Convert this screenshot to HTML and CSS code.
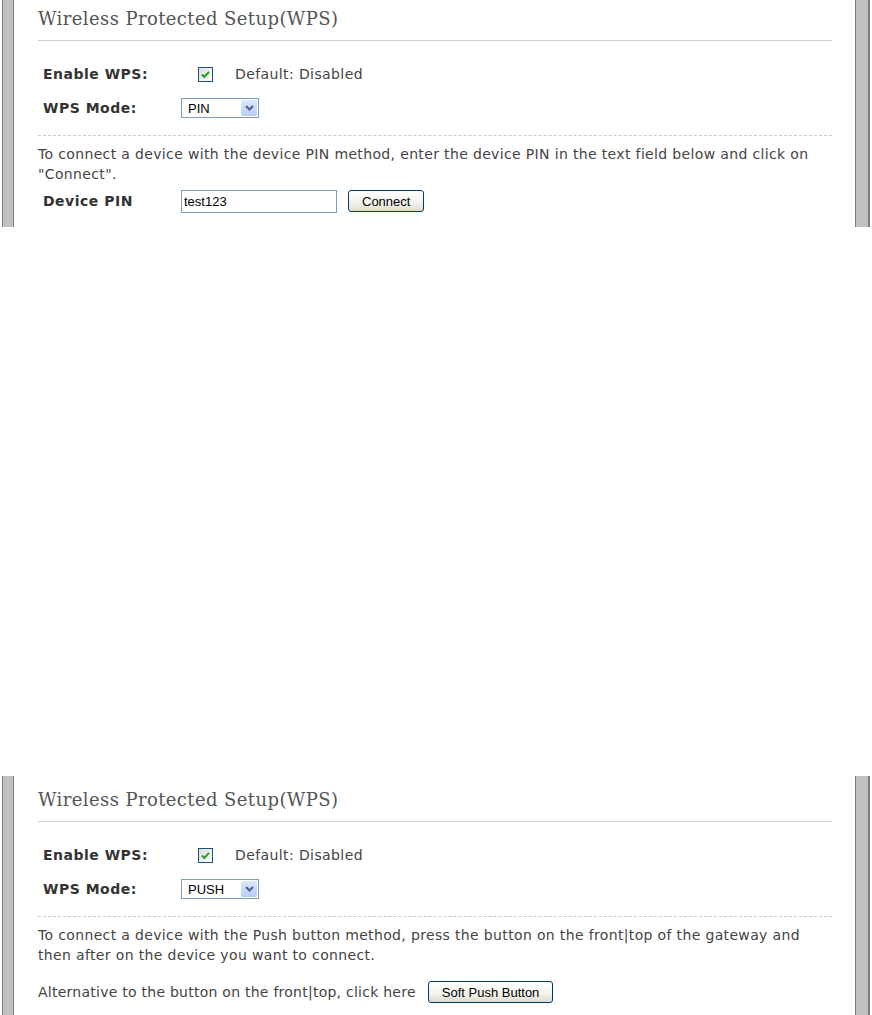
FILE: index.html
```html
<!DOCTYPE html>
<html lang="en">
<head>
    <meta charset="UTF-8">
    <title>Wireless Protected Setup</title>
    <link rel="stylesheet" href="styles.css">
</head>
<body>
    <!-- PIN mode -->
    <div class="panel panel-first">
        <div class="frame-left"></div>
        <div class="content">
            <h2 class="title">Wireless Protected Setup(WPS)</h2>

            <div class="row">
                <label class="label">Enable WPS:</label>
                <span class="checkbox">
                    <svg width="9" height="9" viewBox="0 0 9 9"><path d="M1 4.5 L3.3 7 L8 1.8" fill="none" stroke="#21a121" stroke-width="2"/></svg>
                </span>
                <span class="hint">Default: Disabled</span>
            </div>

            <div class="row">
                <label class="label">WPS Mode:</label>
                <div class="select">
                    <span class="select-value">PIN</span>
                    <span class="select-arrow">
                        <svg width="9" height="6" viewBox="0 0 9 6"><path d="M1 1 L4.5 4.5 L8 1" fill="none" stroke="#4d6185" stroke-width="2"/></svg>
                    </span>
                </div>
            </div>

            <div class="divider"></div>

            <p class="info">To connect a device with the device PIN method, enter the device PIN in the text field below and click on "Connect".</p>

            <div class="row row-pin">
                <label class="label">Device PIN</label>
                <input class="text-input" type="text" value="test123">
                <button class="xp-button">Connect</button>
            </div>
        </div>
        <div class="frame-right"></div>
    </div>

    <!-- PUSH mode -->
    <div class="panel panel-second">
        <div class="frame-left"></div>
        <div class="content">
            <h2 class="title">Wireless Protected Setup(WPS)</h2>

            <div class="row">
                <label class="label">Enable WPS:</label>
                <span class="checkbox">
                    <svg width="9" height="9" viewBox="0 0 9 9"><path d="M1 4.5 L3.3 7 L8 1.8" fill="none" stroke="#21a121" stroke-width="2"/></svg>
                </span>
                <span class="hint">Default: Disabled</span>
            </div>

            <div class="row">
                <label class="label">WPS Mode:</label>
                <div class="select">
                    <span class="select-value">PUSH</span>
                    <span class="select-arrow">
                        <svg width="9" height="6" viewBox="0 0 9 6"><path d="M1 1 L4.5 4.5 L8 1" fill="none" stroke="#4d6185" stroke-width="2"/></svg>
                    </span>
                </div>
            </div>

            <div class="divider"></div>

            <p class="info">To connect a device with the Push button method, press the button on the front|top of the gateway and then after on the device you want to connect.</p>

            <div class="row row-push">
                <span class="plain">Alternative to the button on the front|top, click here</span>
                <button class="xp-button">Soft Push Button</button>
            </div>
        </div>
        <div class="frame-right"></div>
    </div>
</body>
</html>
```

FILE: styles.css
```css
/* Page */
body {
    margin: 0;
    padding: 0;
    background: #ffffff;
    font-family: "DejaVu Sans", Verdana, sans-serif;
    color: #333333;
}

/* Panel with grey window frame */
.panel {
    display: flex;
    align-items: stretch;
}

.panel-second {
    margin-top: 549px;
}

.frame-left {
    width: 10px;
    margin-left: 2px;
    background: #c0c0c0;
    border-left: 1px solid #7c7c7c;
    border-right: 1px solid #7c7c7c;
}

.frame-right {
    width: 12px;
    margin-right: 2px;
    background: #c0c0c0;
    border-left: 1px solid #7c7c7c;
    border-right: 2px solid #7c7c7c;
}

.content {
    flex: 1;
    padding: 14px 23px 14px 24px;
}

.panel-first .content {
    padding-top: 9px;
}

.panel-second .content {
    padding-bottom: 30px;
}

/* Title */
.title {
    margin: 0;
    padding-bottom: 11px;
    border-bottom: 1px solid #cfcfcf;
    font-family: "DejaVu Serif", serif;
    font-weight: normal;
    font-size: 18px;
    letter-spacing: 0.4px;
    line-height: 20px;
    color: #555555;
}

/* Form rows */
.row {
    display: flex;
    align-items: center;
    height: 24px;
    margin-top: 10px;
}

.title + .row {
    margin-top: 21px;
}

.row-pin {
    margin-top: 5px;
}

.row-push {
    margin-top: 15px;
}

.label {
    width: 138px;
    padding-left: 5px;
    font-weight: bold;
    font-size: 14px;
    letter-spacing: 0.5px;
    color: #333333;
}

.hint {
    margin-left: 22px;
    font-size: 14px;
    letter-spacing: 0.4px;
    color: #444444;
}

.plain {
    font-size: 14px;
    letter-spacing: 0.25px;
    color: #444444;
}

/* Checkbox, XP look */
.checkbox {
    display: flex;
    align-items: center;
    justify-content: center;
    width: 13px;
    height: 13px;
    margin-left: 17px;
    border: 1px solid #1c5180;
    background: linear-gradient(135deg, #dcdcd7, #ffffff);
}

/* Select, XP look */
.select {
    display: flex;
    align-items: center;
    justify-content: space-between;
    width: 76px;
    height: 18px;
    border: 1px solid #7f9db9;
    background: #ffffff;
}

.select-value {
    padding-left: 6px;
    font-family: "Liberation Sans", Arial, sans-serif;
    font-size: 13px;
    color: #000000;
}

.select-arrow {
    display: flex;
    align-items: center;
    justify-content: center;
    width: 16px;
    height: 16px;
    margin-right: 1px;
    border-radius: 2px;
    background: linear-gradient(#dde8fd, #b6cbf8);
}

/* Dashed separator */
.divider {
    margin-top: 15px;
    border-top: 1px dashed #cccccc;
}

.info {
    margin: 8px 0 0 0;
    font-size: 14px;
    letter-spacing: 0.35px;
    line-height: 20px;
    color: #444444;
}

/* Inputs and buttons */
.text-input {
    width: 156px;
    height: 23px;
    margin: 0;
    padding: 0 2px;
    box-sizing: border-box;
    border: 1px solid #7f9db9;
    font-family: "Liberation Sans", Arial, sans-serif;
    font-size: 13px;
    color: #000000;
}

.xp-button {
    height: 22px;
    margin-left: 11px;
    padding: 0 13px;
    border: 1px solid #003c74;
    border-radius: 3px;
    background: linear-gradient(#ffffff, #f3f2ec 60%, #dedbcd);
    font-family: "Liberation Sans", Arial, sans-serif;
    font-size: 13px;
    color: #000000;
}

.row-push .xp-button {
    margin-left: 12px;
}
```
